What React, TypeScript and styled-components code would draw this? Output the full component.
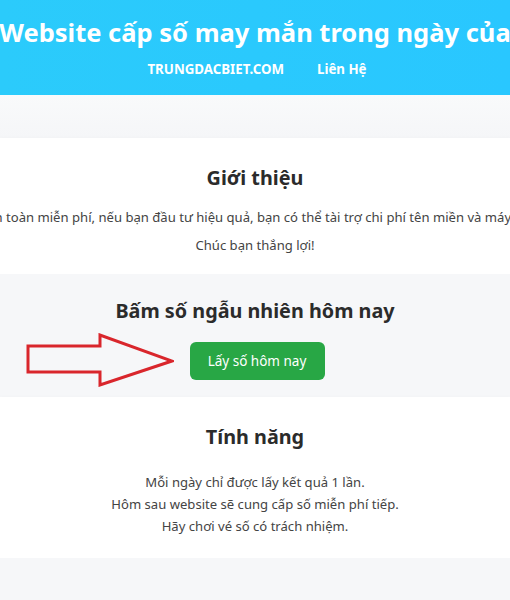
import React from 'react';
import styled, { createGlobalStyle } from 'styled-components';

const GlobalStyle = createGlobalStyle`
    html, body {
        margin: 0;
        padding: 0;
        background: #f6f7f9;
        font-family: "Noto Sans", "Open Sans", sans-serif;
        color: #333;
        overflow-x: hidden;
    }
`;

const Header = styled.header`
    background: linear-gradient(90deg, #2bcbfb 0%, #29c7ff 100%);
    height: 95px;
    display: flex;
    flex-direction: column;
    align-items: center;
    padding-top: 12px;
    box-sizing: border-box;
`;

const SiteTitle = styled.h1`
    margin: 0;
    font-size: 25.5px;
    font-weight: 700;
    color: #fff;
    white-space: nowrap;
    line-height: 40px;
`;

const Nav = styled.nav`
    display: flex;
    gap: 33px;
    margin-top: 8px;
    padding-left: 4px;
`;

const NavLink = styled.a<{ $upper?: boolean }>`
    color: #fff;
    font-size: 13.3px;
    font-weight: 700;
    text-decoration: none;
    text-transform: ${(p) => (p.$upper ? 'uppercase' : 'none')};
`;

const Gap = styled.div`
    height: 43px;
    background: linear-gradient(180deg, #f9fafb 0%, #f5f6f8 100%);
`;

const Section = styled.section<{ $white?: boolean; $height: number }>`
    height: ${(p) => p.$height}px;
    box-sizing: border-box;
    background: ${(p) => (p.$white ? '#fff' : '#f6f7f9')};
    box-shadow: ${(p) => (p.$white ? '0 2px 6px rgba(0, 0, 0, 0.05)' : 'none')};
    display: flex;
    flex-direction: column;
    align-items: center;
    position: relative;
`;

const Heading = styled.h2<{ $top: number }>`
    margin: ${(p) => p.$top}px 0 0;
    font-size: 19.8px;
    font-weight: 700;
    color: #2b2b2b;
    line-height: 30px;
    white-space: nowrap;
`;

const Text = styled.p<{ $top: number; $lh: number }>`
    margin: ${(p) => p.$top}px 0 0;
    font-size: 13.1px;
    line-height: ${(p) => p.$lh}px;
    color: #444;
    text-align: center;
    white-space: nowrap;
`;

const ButtonRow = styled.div`
    display: flex;
    align-items: center;
    margin-top: 16px;
    margin-left: 4px;
    position: relative;
`;

const Arrow = styled.svg`
    position: absolute;
    right: calc(100% + 16px);
    top: -9px;
`;

const GreenButton = styled.button`
    width: 135px;
    height: 38px;
    background: #28a745;
    border: none;
    border-radius: 6px;
    color: #fff;
    font-family: inherit;
    font-size: 13.5px;
    cursor: pointer;
`;

export default function App() {
    return (
        <>
            <GlobalStyle />
            <Header>
                <SiteTitle>Website cấp số may mắn trong ngày của</SiteTitle>
                <Nav>
                    <NavLink $upper href="#">trungdacbiet.com</NavLink>
                    <NavLink href="#">Liên Hệ</NavLink>
                </Nav>
            </Header>
            <Gap />
            <Section $white $height={136}>
                <Heading $top={25}>Giới thiệu</Heading>
                <Text $top={10} $lh={28}>
                    Hoàn toàn miễn phí, nếu bạn đầu tư hiệu quả, bạn có thể tài trợ chi phí tên miền và máy chủ.
                    <br />
                    Chúc bạn thắng lợi!
                </Text>
            </Section>
            <Section $height={123}>
                <Heading $top={22}>Bấm số ngẫu nhiên hôm nay</Heading>
                <ButtonRow>
                    <Arrow width="148" height="54" viewBox="0 0 148 54">
                        <path
                            d="M2 13 H74 V2 L146 28 L74 52 V39 H2 Z"
                            fill="none"
                            stroke="#d9262c"
                            strokeWidth="3"
                            strokeLinejoin="miter"
                        />
                    </Arrow>
                    <GreenButton>Lấy số hôm nay</GreenButton>
                </ButtonRow>
            </Section>
            <Section $white $height={161}>
                <Heading $top={25}>Tính năng</Heading>
                <Text $top={19} $lh={22}>
                    Mỗi ngày chỉ được lấy kết quả 1 lần.
                    <br />
                    Hôm sau website sẽ cung cấp số miễn phí tiếp.
                    <br />
                    Hãy chơi vé số có trách nhiệm.
                </Text>
            </Section>
        </>
    );
}
